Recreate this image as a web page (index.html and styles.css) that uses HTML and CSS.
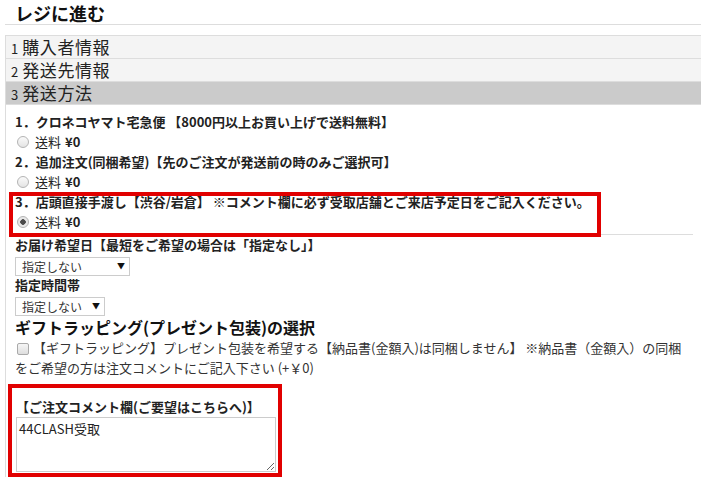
FILE: index.html
```html
<!DOCTYPE html>
<html lang="ja">

<head>
    <meta charset="UTF-8">
    <meta name="viewport" content="width=device-width, initial-scale=1.0">
    <title>レジに進む</title>
    <link rel="stylesheet" href="styles.css">
</head>

<body>
    <div class="page">
        <h1 class="page-title">レジに進む</h1>
        <div class="checkout">
            <!-- ステップ表示 -->
            <ol class="steps">
                <li><span class="step-no">1</span>購入者情報</li>
                <li><span class="step-no">2</span>発送先情報</li>
                <li class="step-current"><span class="step-no">3</span>発送方法</li>
            </ol>

            <div class="form">
                <!-- 発送方法の選択 -->
                <ul class="ship-list">
                    <li class="ship-item">
                        <p class="ship-name">1．クロネコヤマト宅急便 【8000円以上お買い上げで送料無料】</p>
                        <label class="ship-fee"><input type="radio" name="ship">送料 <b>¥0</b></label>
                    </li>
                    <li class="ship-item">
                        <p class="ship-name">2．追加注文(同梱希望)【先のご注文が発送前の時のみご選択可】</p>
                        <label class="ship-fee"><input type="radio" name="ship">送料 <b>¥0</b></label>
                    </li>
                    <li class="ship-item">
                        <p class="ship-name">3．店頭直接手渡し【渋谷/岩倉】 ※コメント欄に必ず受取店舗とご来店予定日をご記入ください。</p>
                        <label class="ship-fee"><input type="radio" name="ship" checked>送料 <b>¥0</b></label>
                        <span class="ship-mark"></span>
                    </li>
                </ul>

                <!-- お届け日時 -->
                <p class="field-label">お届け希望日【最短をご希望の場合は「指定なし」】</p>
                <div class="select-wrap select-date">
                    <select><option>指定しない</option></select>
                    <span class="select-arrow">▼</span>
                </div>
                <p class="field-label field-time">指定時間帯</p>
                <div class="select-wrap select-time">
                    <select><option>指定しない</option></select>
                    <span class="select-arrow">▼</span>
                </div>

                <!-- ギフト -->
                <h2 class="gift-title">ギフトラッピング(プレゼント包装)の選択</h2>
                <p class="gift-option"><input type="checkbox">【ギフトラッピング】プレゼント包装を希望する【納品書(金額入)は同梱しません】 ※納品書（金額入）の同梱をご希望の方は注文コメントにご記入下さい (+￥0)</p>

                <!-- コメント -->
                <div class="comment-box">
                    <p class="field-label">【ご注文コメント欄(ご要望はこちらへ)】</p>
                    <textarea class="comment-text">44CLASH受取</textarea>
                </div>
            </div>
        </div>
    </div>
</body>

</html>
```

FILE: styles.css
```css
* {
    box-sizing: border-box;
}

body {
    margin: 0;
    font-family: "Noto Sans CJK JP", "Noto Sans", sans-serif;
    font-size: 13px;
    color: #222;
    background: #fff;
}

.page {
    padding-left: 5px;
}

.page-title {
    margin: 0;
    height: 25px;
    padding: 2px 0 0 10px;
    font-size: 18px;
    line-height: 22px;
    font-weight: bold;
    color: #111;
    border-bottom: 1px solid #ddd;
}

.checkout {
    margin-top: 10px;
    border-left: 1px solid #ddd;
}

/* ステップ */
.steps {
    margin: 0;
    padding: 0;
    list-style: none;
}

.steps li {
    height: 23px;
    padding-left: 5px;
    border-top: 1px solid #ddd;
    background: #f4f4f4;
    font-size: 17px;
    line-height: 22px;
    letter-spacing: 0.6px;
}

.steps .step-current {
    height: 24px;
    background: #cbcbcb;
    border-bottom: 1px solid #ddd;
}

.step-no {
    margin-right: 4px;
    font-size: 13px;
    letter-spacing: 0;
}

.form {
    padding: 0 8px 0 9px;
}

/* 発送方法 */
.ship-list {
    margin: 0;
    padding: 7px 0 2px;
    list-style: none;
    border-bottom: 1px solid #ddd;
}

.ship-item {
    position: relative;
}

.ship-name {
    margin: 0;
    font-weight: bold;
    line-height: 20px;
    white-space: nowrap;
}

.ship-fee {
    display: flex;
    align-items: center;
    height: 20px;
    line-height: 20px;
}

.ship-fee b {
    margin-left: 4px;
}

.ship-fee input {
    appearance: none;
    width: 12px;
    height: 12px;
    margin: 0 6px 0 2px;
    border: 1px solid #b4b4b4;
    border-radius: 50%;
    background: linear-gradient(#fafafa, #e4e4e4);
}

.ship-fee input:checked {
    background: radial-gradient(circle, #4a4a4a 0 2.5px, #e8e8e8 3px);
}

.ship-mark {
    position: absolute;
    left: -6px;
    top: 0;
    width: 592px;
    height: 45px;
    border: 4px solid #e10000;
    pointer-events: none;
}

/* お届け日時 */
.field-label {
    margin: 0;
    font-weight: bold;
    line-height: 20px;
}

.field-time {
    margin-top: -1px;
}

.select-wrap {
    position: relative;
    height: 19px;
    margin-top: 2px;
}

.select-date {
    width: 115px;
}

.select-time {
    width: 90px;
}

.select-wrap select {
    appearance: none;
    display: block;
    width: 100%;
    height: 100%;
    margin: 0;
    padding: 0 0 0 6px;
    border: 1px solid #ccc;
    border-radius: 0;
    background: #fff;
    font-family: inherit;
    font-size: 12px;
    color: #333;
}

.select-arrow {
    position: absolute;
    right: 5px;
    top: 4px;
    font-size: 8px;
    line-height: 10px;
    color: #111;
}

/* ギフト */
.gift-title {
    margin: 0;
    font-size: 16px;
    line-height: 22px;
    font-weight: bold;
    color: #111;
}

.gift-option {
    margin: 0;
    line-height: 20px;
    color: #333;
}

.gift-option input {
    appearance: none;
    width: 12px;
    height: 12px;
    margin: 0 4px 0 2px;
    vertical-align: -2px;
    border: 1px solid #aaa;
    border-radius: 2px;
    background: linear-gradient(#f6f6f6, #dedede);
}

/* コメント */
.comment-box {
    width: 274px;
    margin: 6px 0 0 -7px;
    padding: 9px 0 1px 4px;
    border: 4px solid #e10000;
}

.comment-text {
    display: block;
    width: 260px;
    height: 55px;
    margin: 0;
    padding: 2px;
    border: 1px solid #ccc;
    font-family: inherit;
    font-size: 13px;
    line-height: 17px;
    color: #222;
}
```
